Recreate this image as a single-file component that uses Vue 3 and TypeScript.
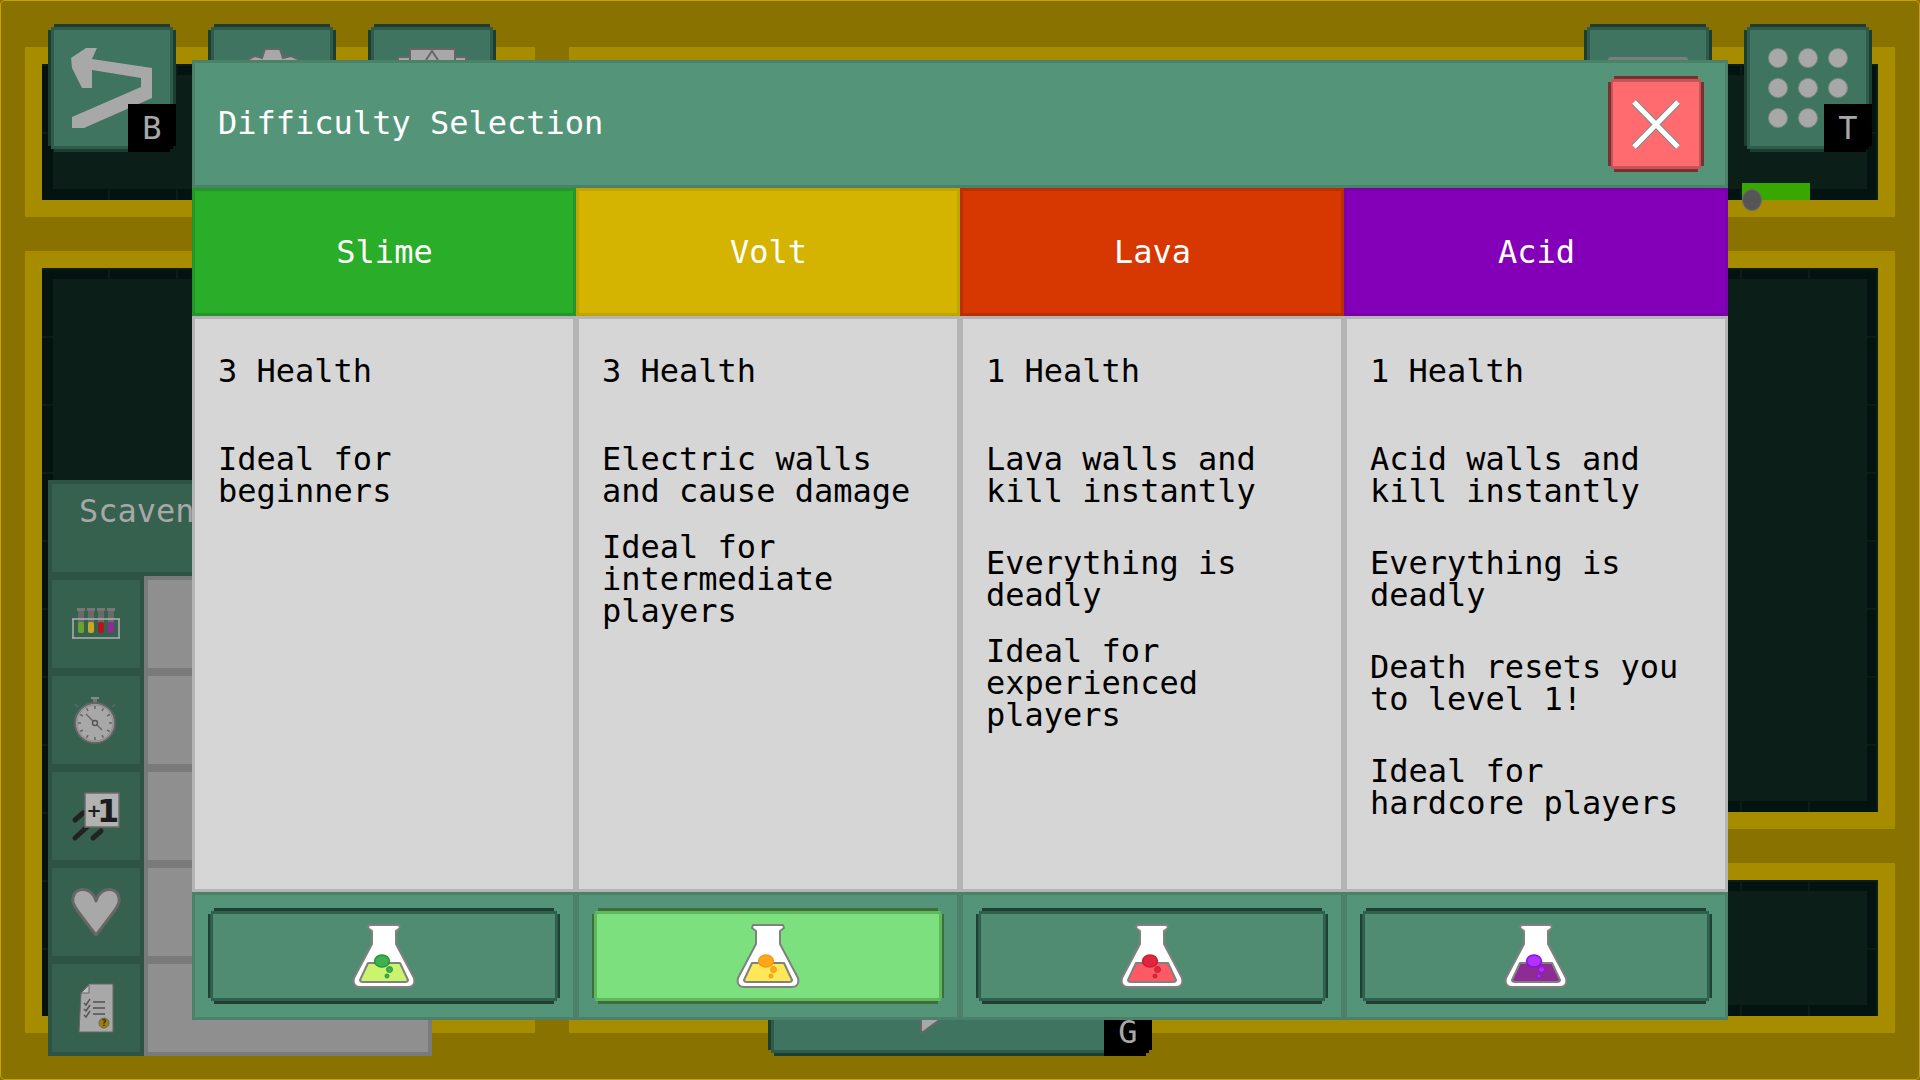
<script setup lang="ts">
interface Para { text: string; gap: number }
interface Difficulty {
  name: string; theme: string; selected: boolean;
  liquid: string; bubble: string; bubbleEdge: string; paras: Para[]
}
const difficulties: Difficulty[] = [
  { name: 'Slime', theme: 'slime', selected: false, liquid: '#ccf36d', bubble: '#3fb04f', bubbleEdge: '#26933a', paras: [
    { text: '3 Health', gap: 0 }, { text: 'Ideal for beginners', gap: 56 } ] },
  { name: 'Volt', theme: 'volt', selected: true, liquid: '#ffe858', bubble: '#ffa61c', bubbleEdge: '#f59a10', paras: [
    { text: '3 Health', gap: 0 }, { text: 'Electric walls and cause damage', gap: 56 }, { text: 'Ideal for intermediate players', gap: 24 } ] },
  { name: 'Lava', theme: 'lava', selected: false, liquid: '#ff5a64', bubble: '#e0263c', bubbleEdge: '#c81e34', paras: [
    { text: '1 Health', gap: 0 }, { text: 'Lava walls and kill instantly', gap: 56 }, { text: 'Everything is deadly', gap: 40 }, { text: 'Ideal for experienced players', gap: 24 } ] },
  { name: 'Acid', theme: 'acid', selected: false, liquid: '#8e2b94', bubble: '#b232ff', bubbleEdge: '#8a10e0', paras: [
    { text: '1 Health', gap: 0 }, { text: 'Acid walls and kill instantly', gap: 56 }, { text: 'Everything is deadly', gap: 40 }, { text: 'Death resets you to level 1!', gap: 40 }, { text: 'Ideal for hardcore players', gap: 40 } ] },
]
const dots: [number, number][] = [
  [34,34],[64,34],[94,34],[34,64],[64,64],[94,64],[34,94],[64,94],
]
const tubes = [
  { x: 17, c: '#6aa52a' }, { x: 27, c: '#c8a820' }, { x: 37, c: '#b01820' }, { x: 47, c: '#8e2b94' },
]
const ticks = [0, 30, 60, 90, 120, 150, 180, 210, 240, 270, 300, 330]
const checks = [26, 32, 38]
</script>

<template>
  <div class="screen">
    <div class="field">
      <div class="field-col left">
        <div class="pit top"><div class="pit-inner"></div></div>
        <div class="pit grow"><div class="pit-inner"></div></div>
      </div>
      <div class="field-col right">
        <div class="pit top"><div class="pit-inner"></div></div>
        <div class="pit grow"><div class="pit-inner"></div></div>
        <div class="pit top"><div class="pit-inner"></div></div>
      </div>
    </div>

    <div class="hud">
      <div class="hud-top">
        <div class="hud-group">
          <div class="game-btn">
            <svg class="fill" viewBox="0 0 128 128">
              <polygon points="23,34 38,24 49,24 44,35 104,44 104,74 36,104 24,104 24,93 93,63 93,54 44,46 44,64 34,64 24,44" fill="#a8a8a8"/>
            </svg>
            <span class="key">B</span>
          </div>
          <div class="game-btn">
            <svg class="fill" viewBox="0 0 128 128">
              <polygon points="39,50 39,36 47,32 54,34 57,25 72,25 75,34 83,32 92,36 92,50" fill="#a8a8a8" stroke="#666" stroke-width="2"/>
            </svg>
          </div>
          <div class="game-btn">
            <svg class="fill" viewBox="0 0 128 128">
              <rect x="30" y="33" width="68" height="14" fill="#a8a8a8" stroke="#666" stroke-width="2"/>
              <rect x="42" y="25" width="45" height="24" fill="#a8a8a8" stroke="#666" stroke-width="2"/>
              <path d="M58 36 L64 27 L70 36" fill="none" stroke="#666" stroke-width="2"/>
            </svg>
          </div>
        </div>
        <div class="hud-group">
          <div class="game-btn">
            <svg class="fill" viewBox="0 0 128 128">
              <rect x="24" y="33" width="80" height="14" rx="3" fill="#7d7d7d"/>
            </svg>
          </div>
          <div class="game-btn">
            <svg class="fill" viewBox="0 0 128 128">
              <circle v-for="(d, i) in dots" :key="i" :cx="d[0]" :cy="d[1]" r="9.5" fill="#a8a8a8" stroke="#7c8c84" stroke-width="1"/>
            </svg>
            <span class="key">T</span>
          </div>
        </div>
      </div>
      <div class="meter"><span class="meter-knob"></span></div>

      <div class="hud-bottom">
        <div class="panel">
          <div class="panel-title">Scavenger</div>
          <div class="panel-row">
            <div class="side-cell">
              <svg width="64" height="64" viewBox="0 0 64 64">
                <g v-for="t in tubes" :key="t.x">
                  <rect :x="t.x - 4" y="16" width="8" height="3" fill="#777"/>
                  <rect :x="t.x - 3" y="19" width="6" height="12" fill="#6a6a6a"/>
                  <rect :x="t.x - 3" y="30" width="6" height="11" rx="2" :fill="t.c"/>
                </g>
                <path d="M8 27 H56 M9 27 V46 M55 27 V46 M8 46 H56" fill="none" stroke="#b0b0b0" stroke-width="1.5"/>
              </svg>
            </div>
            <div class="slot"></div>
          </div>
          <div class="panel-row">
            <div class="side-cell">
              <svg width="64" height="64" viewBox="0 0 64 64">
                <rect x="27" y="9" width="8" height="2" fill="#8a8a8a"/>
                <rect x="29" y="11" width="4" height="4" fill="#777"/>
                <path d="M11 16 L14 19 M51 16 L48 19" stroke="#666" stroke-width="1.5"/>
                <circle cx="31" cy="35" r="20" fill="#a8a8a8" stroke="#666" stroke-width="2"/>
                <circle cx="31" cy="35" r="18" fill="none" stroke="#8a8a8a" stroke-width="1"/>
                <line v-for="t in ticks" :key="t" x1="31" y1="18" x2="31" y2="21" stroke="#666" stroke-width="1.5" :transform="`rotate(${t} 31 35)`"/>
                <path d="M22 26 L38 42" stroke="#666" stroke-width="1.5"/>
                <circle cx="31" cy="35" r="2.5" fill="#a8a8a8" stroke="#555" stroke-width="1.5"/>
              </svg>
            </div>
            <div class="slot"></div>
          </div>
          <div class="panel-row">
            <div class="side-cell">
              <svg width="64" height="64" viewBox="0 0 64 64">
                <path d="M11 36 L19 29 M11 54 L24 42 M29 54 L37 47" stroke="#222" stroke-width="5" stroke-linecap="round"/>
                <rect x="21" y="9" width="34" height="34" fill="#b2b2b2" stroke="#6b6b6b" stroke-width="1.5"/>
                <text x="22.5" y="33" class="plus-one"><tspan class="plus">+</tspan><tspan class="one" dx="-4.5" dy="5">1</tspan></text>
              </svg>
            </div>
            <div class="slot"></div>
          </div>
          <div class="panel-row">
            <div class="side-cell">
              <svg width="64" height="64" viewBox="0 0 64 64">
                <path d="M32 21 C30 13 24 9 18 9.5 C11 10 8 16 9 22 C10 27 15 33 32 55 C49 33 54 27 55 22 C56 16 53 10 46 9.5 C40 9 34 13 32 21 Z" fill="#a8a8a8" stroke="#666" stroke-width="3" stroke-linejoin="round"/>
              </svg>
            </div>
            <div class="slot"></div>
          </div>
          <div class="panel-row">
            <div class="side-cell">
              <svg width="64" height="64" viewBox="0 0 64 64">
                <path d="M25 8 H49 V56 H15 L17 17 Z" fill="#a8a8a8" stroke="#666" stroke-width="1"/>
                <path d="M25 9 V17 H17 Z" fill="#bdbdbd" stroke="#666" stroke-width="1"/>
                <g v-for="c in checks" :key="c">
                  <path :d="`M20 ${c + 1} L22 ${c + 3} L26 ${c - 3}`" fill="none" stroke="#555" stroke-width="1.5"/>
                  <rect x="29" :y="c - 1" width="12" height="2" fill="#666"/>
                </g>
                <circle cx="40" cy="47" r="5" fill="#a08000" stroke="#666" stroke-width="1"/>
                <text x="40" y="50" class="doc-q">?</text>
              </svg>
            </div>
            <div class="slot"></div>
          </div>
        </div>
        <div class="go-btn">
          <svg class="fill" viewBox="0 0 384 96">
            <polygon points="153,56 177,56 155,72 153,72" fill="#a8a8a8" stroke="#666" stroke-width="2"/>
          </svg>
          <span class="key">G</span>
        </div>
      </div>
    </div>

    <div class="modal">
      <div class="modal-head">
        <span class="modal-title">Difficulty Selection</span>
        <div class="close-btn">
          <svg width="96" height="96" viewBox="0 0 96 96">
            <path d="M26 26 L70 71 M70 26 L26 71" stroke="#7c8c84" stroke-width="7"/>
            <path d="M26 26 L70 71 M70 26 L26 71" stroke="#fff" stroke-width="5"/>
          </svg>
        </div>
      </div>
      <div class="cols">
        <div v-for="d in difficulties" :key="d.name" class="col">
          <div class="col-title" :class="d.theme">{{ d.name }}</div>
          <div class="col-body">
            <p v-for="(p, i) in d.paras" :key="i" :class="'gap-' + p.gap">{{ p.text }}</p>
          </div>
          <div class="col-foot">
            <div class="pick" :class="{ selected: d.selected }">
              <svg width="64" height="64" viewBox="0 0 64 64">
                <path d="M17 1 H47 L48 4 L44 7 V20 L62 54 Q64 63 55 63 H9 Q0 63 2 54 L20 20 V7 L16 4 Z" fill="#fff" stroke="#808080" stroke-width="2" stroke-linejoin="round"/>
                <path d="M16 39 H48 L56 56 Q56 58 53 58 H11 Q8 58 8 56 Z" :fill="d.liquid" stroke="#808080" stroke-width="2" stroke-linejoin="round"/>
                <ellipse cx="30" cy="37" rx="7.5" ry="6" :fill="d.bubble" :stroke="d.bubbleEdge" stroke-width="1.5"/>
                <circle cx="37.5" cy="45.5" r="3" :fill="d.bubble" :stroke="d.bubbleEdge" stroke-width="1"/>
                <circle cx="35" cy="52" r="2" :fill="d.bubble" :stroke="d.bubbleEdge" stroke-width="1"/>
              </svg>
            </div>
          </div>
        </div>
      </div>
    </div>
  </div>
</template>

<style>
html, body { margin: 0; padding: 0; background: #8a7200; }
</style>

<style scoped>
.screen {
  position: relative;
  width: 1920px;
  height: 1080px;
  box-sizing: border-box;
  overflow: hidden;
  background: #8a7200;
  border: 1px solid #c4a400;
  border-radius: 5px;
  font-family: "DejaVu Sans Mono", "Liberation Mono", monospace;
  font-size: 32px;
  line-height: 32px;
}
.field {
  display: flex;
  gap: 34px;
  padding: 46px 24px 46px 24px;
  height: 100%;
  box-sizing: border-box;
}
.field-col { display: flex; flex-direction: column; gap: 34px; }
.field-col.left { width: 510px; }
.field-col.right { flex: 1; }
.pit {
  box-sizing: border-box;
  padding: 17px;
  background: #a88c00;
}
.pit.top { height: 170px; flex: none; }
.pit.grow { flex: 1; }
.pit-inner {
  box-sizing: border-box;
  height: 100%;
  padding: 11px;
  background-color: #03130f;
  background-image:
    repeating-linear-gradient(90deg, transparent 0 66px, #0a1d17 66px 68px),
    repeating-linear-gradient(0deg, transparent 0 66px, #0a1d17 66px 68px);
}
.pit-inner::after {
  content: "";
  display: block;
  height: 100%;
  background: #0b1f18;
}

.hud {
  position: absolute;
  inset: -1px;
  box-sizing: border-box;
  padding: 24px 48px;
  display: flex;
  flex-direction: column;
}
.hud-top { display: flex; justify-content: space-between; height: 128px; flex: none; }
.hud-group { display: flex; gap: 32px; }
.game-btn, .go-btn, .close-btn, .pick {
  position: relative;
  clip-path: polygon(
    6px 0, calc(100% - 6px) 0, calc(100% - 6px) 3px, calc(100% - 3px) 3px, calc(100% - 3px) 6px, 100% 6px,
    100% calc(100% - 6px), calc(100% - 3px) calc(100% - 6px), calc(100% - 3px) calc(100% - 3px), calc(100% - 6px) calc(100% - 3px), calc(100% - 6px) 100%,
    6px 100%, 6px calc(100% - 3px), 3px calc(100% - 3px), 3px calc(100% - 6px), 0 calc(100% - 6px),
    0 6px, 3px 6px, 3px 3px, 6px 3px);
}
.game-btn, .go-btn {
  background: #3f7560;
  box-shadow:
    inset 3px 0 #1d3d32, inset -3px 0 #1d3d32, inset 0 3px #1d3d32, inset 0 -3px #1d3d32,
    inset 6px 6px #2f5c4a, inset -6px -6px #2f5c4a;
}
.game-btn { width: 128px; height: 128px; }
.fill { position: absolute; inset: 0; width: 100%; height: 100%; display: block; }
.key {
  position: absolute;
  right: 0;
  bottom: 0;
  width: 48px;
  height: 48px;
  background: #000;
  color: #a8a8a8;
  display: flex;
  align-items: center;
  justify-content: center;
}
.meter {
  position: relative;
  flex: none;
  align-self: flex-end;
  width: 68px;
  height: 17px;
  margin: 31px 62px 0 0;
  background: #38a800;
}
.meter-knob {
  position: absolute;
  left: 0;
  top: 6px;
  width: 20px;
  height: 22px;
  border-radius: 50%;
  background: #555;
  border: 1px solid #6a6a6a;
  box-sizing: border-box;
}
.hud-bottom {
  display: flex;
  align-items: flex-end;
  margin-top: 280px;
  flex: 1;
}
.panel {
  width: 384px;
  height: 576px;
  flex: none;
  display: flex;
  flex-direction: column;
}
.panel-title {
  box-sizing: border-box;
  height: 96px;
  background: #36614f;
  border: 4px solid #2c5343;
  color: #a8a8a8;
  padding: 11px 0 0 27px;
  white-space: nowrap;
  overflow: hidden;
}
.panel-row { display: flex; height: 96px; }
.side-cell {
  box-sizing: border-box;
  width: 96px;
  background: #36614f;
  border: 4px solid #2c5343;
  display: flex;
  align-items: center;
  justify-content: center;
}
.slot {
  flex: 1;
  background: #8f8f8f;
  border: 4px solid #7a7a7a;
}
.plus-one {
  font-family: "DejaVu Sans", sans-serif;
  font-weight: 700;
  fill: #1c1c1c;
}
.plus { font-size: 18px; }
.one { font-size: 32px; }
.doc-q {
  font-family: "DejaVu Sans", sans-serif;
  font-weight: 700;
  font-size: 8px;
  fill: #3c3000;
  text-anchor: middle;
}
.go-btn {
  width: 384px;
  height: 96px;
  margin-left: 336px;
  flex: none;
}

.modal {
  position: absolute;
  left: 191px;
  top: 59px;
  width: 1536px;
  height: 960px;
  display: flex;
  flex-direction: column;
}
.modal-head {
  box-sizing: border-box;
  height: 128px;
  flex: none;
  background: #54957a;
  border: 3px solid #4b8169;
  display: flex;
  align-items: center;
  justify-content: space-between;
  padding: 0 21px 0 23px;
  color: #fff;
}
.modal-title { margin-top: -2px; }
.close-btn {
  width: 96px;
  height: 96px;
  background: #ff6b6e;
  box-shadow:
    inset 3px 0 #7d2f2f, inset -3px 0 #7d2f2f, inset 0 3px #7d2f2f, inset 0 -3px #7d2f2f,
    inset 5px 6px #c4565a, inset -5px -6px #c4565a;
}
.close-btn svg { display: block; }
.cols { display: grid; grid-template-columns: repeat(4, 384px); flex: 1; }
.col { display: flex; flex-direction: column; min-height: 0; }
.col-title {
  box-sizing: border-box;
  height: 128px;
  flex: none;
  border: 3px solid;
  color: #fff;
  display: flex;
  align-items: center;
  justify-content: center;
  padding: 0 0 1px 1px;
}
.slime { background: #2aad29; border-color: #24952a; }
.volt { background: #d4b400; border-color: #c0a400; }
.lava { background: #d73700; border-color: #b83000; }
.acid { background: #8400b8; border-color: #7a00aa; }
.col-body {
  box-sizing: border-box;
  height: 576px;
  flex: none;
  background: #d6d6d6;
  border: 3px solid #b4b4b4;
  padding: 36px 23px 0;
  color: #000;
}
.col-body p { margin: 0; }
.gap-0 { margin-top: 0; }
.col-body .gap-24 { margin-top: 24px; }
.col-body .gap-40 { margin-top: 40px; }
.col-body .gap-56 { margin-top: 56px; }
.col-foot {
  box-sizing: border-box;
  height: 128px;
  flex: none;
  background: #54957a;
  border: 3px solid #4b8169;
  padding: 13px;
}
.pick {
  height: 96px;
  background: #4f8c72;
  display: flex;
  align-items: center;
  justify-content: center;
  box-shadow:
    inset 2px 0 #1f3f33, inset -2px 0 #1f3f33, inset 0 3px #1f3f33, inset 0 -3px #1f3f33,
    inset 5px 6px #2f5f4d, inset -5px -6px #2f5f4d;
}
.pick.selected {
  background: #7ce07f;
  box-shadow:
    inset 2px 0 #3f6f38, inset -2px 0 #3f6f38, inset 0 3px #3f6f38, inset 0 -3px #3f6f38,
    inset 5px 6px #5fb860, inset -5px -6px #5fb860;
}
.pick svg { display: block; }
</style>
